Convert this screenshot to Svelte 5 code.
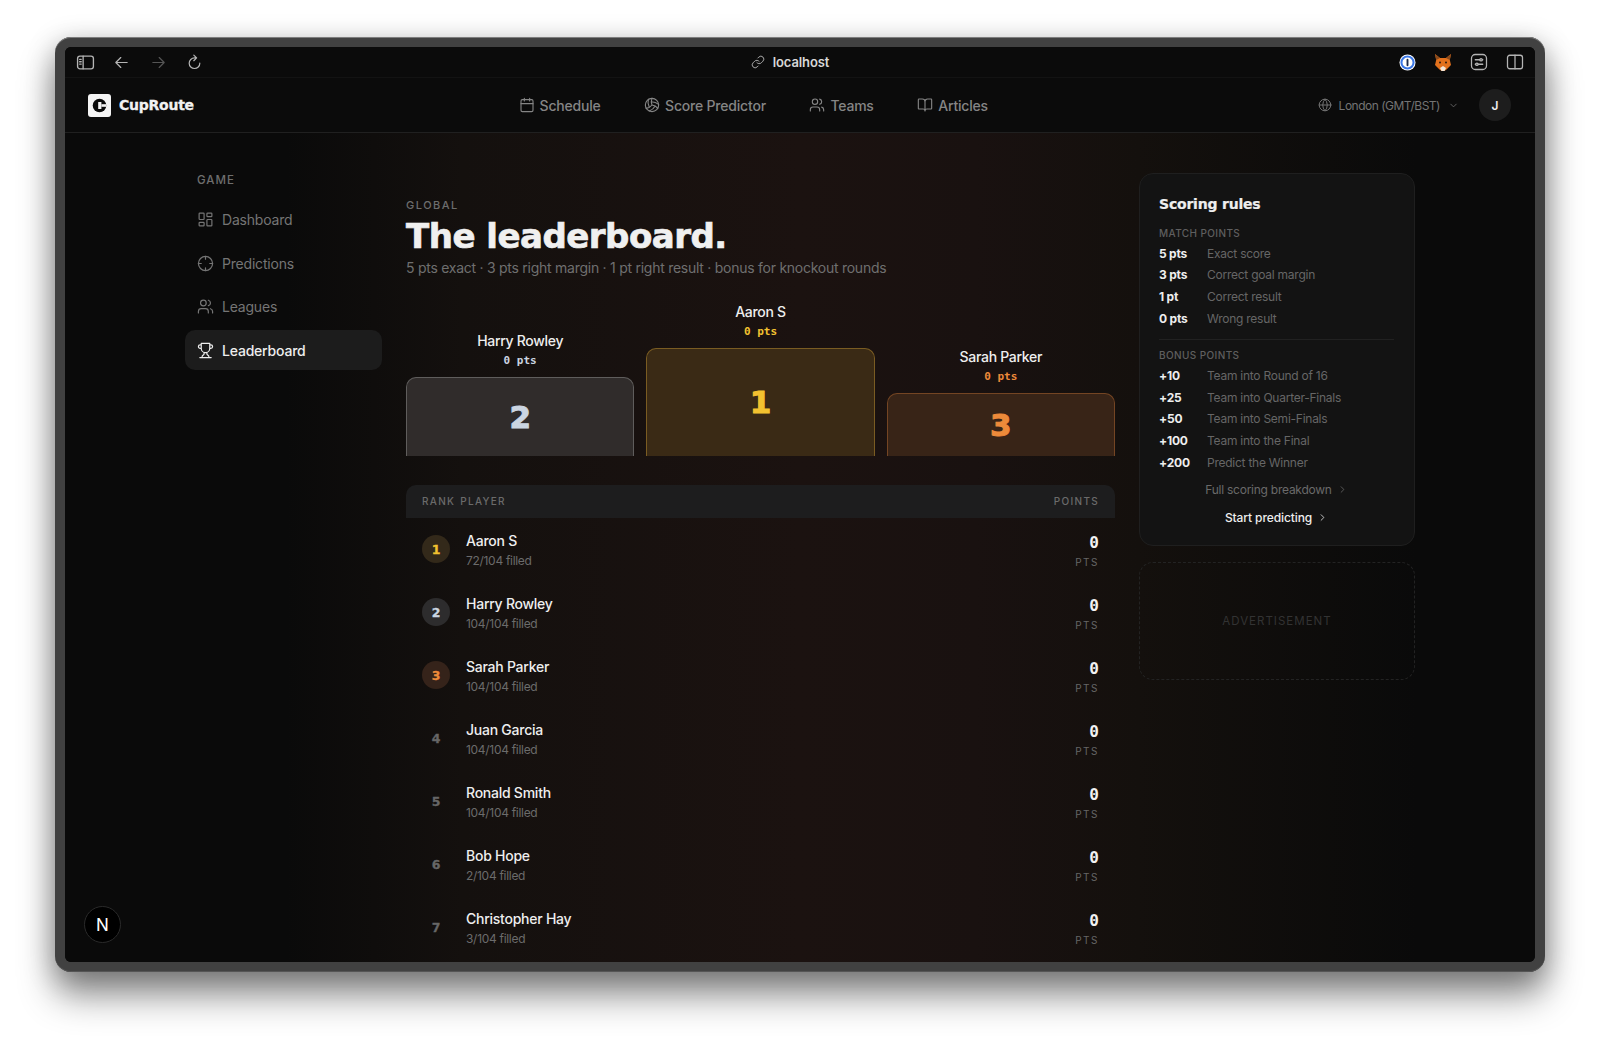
<script>
  const game = [
    { label: 'Dashboard', icon: 'dash' },
    { label: 'Predictions', icon: 'cross' },
    { label: 'Leagues', icon: 'users' },
    { label: 'Leaderboard', icon: 'trophy', active: true }
  ];
  const top = [
    { label: 'Schedule', icon: 'cal' },
    { label: 'Score Predictor', icon: 'ball' },
    { label: 'Teams', icon: 'users' },
    { label: 'Articles', icon: 'book' }
  ];
  const podium = [
    { name: 'Harry Rowley', rank: 2, cls: 'silver' },
    { name: 'Aaron S', rank: 1, cls: 'gold' },
    { name: 'Sarah Parker', rank: 3, cls: 'bronze' }
  ];
  const rows = [
    ['Aaron S', '72/104 filled', 'gold'],
    ['Harry Rowley', '104/104 filled', 'silver'],
    ['Sarah Parker', '104/104 filled', 'bronze'],
    ['Juan Garcia', '104/104 filled', ''],
    ['Ronald Smith', '104/104 filled', ''],
    ['Bob Hope', '2/104 filled', ''],
    ['Christopher Hay', '3/104 filled', '']
  ];
  const match = [['5 pts', 'Exact score'], ['3 pts', 'Correct goal margin'], ['1 pt', 'Correct result'], ['0 pts', 'Wrong result']];
  const bonus = [['+10', 'Team into Round of 16'], ['+25', 'Team into Quarter-Finals'], ['+50', 'Team into Semi-Finals'], ['+100', 'Team into the Final'], ['+200', 'Predict the Winner']];
</script>

{#snippet icon(name, size)}
  <svg class="ic" width={size} height={size} viewBox="0 0 24 24" fill="none" stroke="currentColor" stroke-width="1.7" stroke-linecap="round" stroke-linejoin="round">
    {#if name === 'cal'}
      <rect x="3" y="4" width="18" height="18" rx="2" /><path d="M16 2v4M8 2v4M3 10h18" />
    {:else if name === 'ball'}
      <circle cx="12" cy="12" r="10" /><path d="M11.1 7.1a16.55 16.55 0 0 1 10.9 4M12 12a12.6 12.6 0 0 1-8.7 5M16.8 13.6a16.55 16.55 0 0 1-9 7.5M20.7 17a12.8 12.8 0 0 0-8.7-5 13.3 13.3 0 0 1 0-10M6.6 3.3a16.55 16.55 0 0 0 1.1 11.4" />
    {:else if name === 'users'}
      <path d="M16 21v-2a4 4 0 0 0-4-4H6a4 4 0 0 0-4 4v2M22 21v-2a4 4 0 0 0-3-3.87M16 3.13a4 4 0 0 1 0 7.75" /><circle cx="9" cy="7" r="4" />
    {:else if name === 'book'}
      <path d="M12 7v14M3 18a1 1 0 0 1-1-1V4a1 1 0 0 1 1-1h5a4 4 0 0 1 4 4 4 4 0 0 1 4-4h5a1 1 0 0 1 1 1v13a1 1 0 0 1-1 1h-6a3 3 0 0 0-3 3 3 3 0 0 0-3-3z" />
    {:else if name === 'globe'}
      <circle cx="12" cy="12" r="10" /><path d="M12 2a14.5 14.5 0 0 0 0 20 14.5 14.5 0 0 0 0-20M2 12h20" />
    {:else if name === 'down'}
      <path d="m6 9 6 6 6-6" />
    {:else if name === 'right'}
      <path d="m9 18 6-6-6-6" />
    {:else if name === 'dash'}
      <rect x="3" y="3" width="7" height="9" rx="1" /><rect x="14" y="3" width="7" height="5" rx="1" /><rect x="14" y="12" width="7" height="9" rx="1" /><rect x="3" y="16" width="7" height="5" rx="1" />
    {:else if name === 'cross'}
      <circle cx="12" cy="12" r="10" /><path d="M22 12h-4M6 12H2M12 6V2M12 22v-4" />
    {:else if name === 'trophy'}
      <path d="M6 9H4.5a2.5 2.5 0 0 1 0-5H6M18 9h1.5a2.5 2.5 0 0 0 0-5H18M4 22h16M10 14.66V17c0 .55-.47.98-.97 1.21C7.85 18.75 7 20.24 7 22M14 14.66V17c0 .55.47.98.97 1.21C16.15 18.75 17 20.24 17 22M18 2H6v7a6 6 0 0 0 12 0V2Z" />
    {:else if name === 'side'}
      <rect x="2" y="4" width="20" height="16" rx="3" /><path d="M9 4v16M4.6 8h2M4.6 11h2M4.6 14h2" />
    {:else if name === 'back'}
      <path d="M20 12H4M11 5l-7 7 7 7" />
    {:else if name === 'fwd'}
      <path d="M4 12h16M13 5l7 7-7 7" />
    {:else if name === 'reload'}
      <path d="M19.5 13a7.5 7.5 0 1 1-7.5-7.5h2M11 1.5l4 4-4 4" />
    {:else if name === 'link'}
      <path d="M10 13a5 5 0 0 0 7.54.54l3-3a5 5 0 0 0-7.07-7.07l-1.72 1.71M14 11a5 5 0 0 0-7.54-.54l-3 3a5 5 0 0 0 7.07 7.07l1.71-1.71" />
    {:else if name === 'tune'}
      <rect x="2" y="2" width="20" height="20" rx="5" /><path d="M7 9h6M16.5 9H17M7 15h.5M11 15h6" /><circle cx="14.7" cy="9" r="1.6" /><circle cx="9.2" cy="15" r="1.6" />
    {:else if name === 'split'}
      <rect x="2" y="3" width="20" height="18" rx="3" /><path d="M12 3v18" />
    {/if}
  </svg>
{/snippet}

<div class="window">
  <div class="screen">
    <div class="toolbar">
      <div class="tools left">
        <span class="tool">{@render icon('side', 19)}</span>
        <span class="tool">{@render icon('back', 17)}</span>
        <span class="tool dim">{@render icon('fwd', 17)}</span>
        <span class="tool">{@render icon('reload', 17)}</span>
      </div>
      <div class="address">{@render icon('link', 14)}<span>localhost</span></div>
      <div class="tools right">
        <span class="tool">
          <svg width="17" height="17" viewBox="0 0 18 18"><circle cx="9" cy="9" r="8.5" fill="#fff" /><circle cx="9" cy="9" r="6.4" fill="none" stroke="#3b78e7" stroke-width="2.2" /><rect x="8" y="5" width="2" height="8" rx="1" fill="#1b2a4a" /></svg>
        </span>
        <span class="tool">
          <svg width="18" height="17" viewBox="0 0 18 17"><path d="M1 0l5 4h6l5-4-1.2 6 1.2 5-4.5 4.5L10.5 17h-3L5.500 15.500 1 11l1.200-5z" fill="#e2711d" /><path d="M1 0l5 4-3.800 2zM17 0l-5 4 3.800 2z" fill="#8a4a1c" /><path d="M6 14l3-2 3 2-1.500 3h-3z" fill="#f3e6d8" /><circle cx="6" cy="8.500" r="1" fill="#2a1a10" /><circle cx="12" cy="8.500" r="1" fill="#2a1a10" /></svg>
        </span>
        <span class="tool">{@render icon('tune', 18)}</span>
        <span class="tool">{@render icon('split', 18)}</span>
      </div>
    </div>

    <header class="nav">
      <div class="brand">
        <svg width="23" height="23" viewBox="0 0 23 23"><rect width="23" height="23" rx="3" fill="#f4f4f4" /><circle cx="11.500" cy="11.500" r="6.800" fill="#0b0b0b" /><rect x="10.200" y="8" width="3.200" height="7" fill="#f4f4f4" /><rect x="13.400" y="10.200" width="5" height="2.600" fill="#f4f4f4" /></svg>
        <span>CupRoute</span>
      </div>
      <nav class="links">
        {#each top as t}
          <span class="link">{@render icon(t.icon, 16)}{t.label}</span>
        {/each}
      </nav>
      <div class="account">
        <span class="tz">{@render icon('globe', 14)}<span>London (GMT/BST)</span><span class="chev">{@render icon('down', 11)}</span></span>
        <span class="avatar">J</span>
      </div>
    </header>

    <div class="page">
      <aside class="side">
        <div class="side-title">GAME</div>
        {#each game as g}
          <div class="side-item" class:active={g.active}>{@render icon(g.icon, 17)}{g.label}</div>
        {/each}
      </aside>

      <main class="content">
        <div class="eyebrow">GLOBAL</div>
        <h1>The leaderboard.</h1>
        <p class="sub">5 pts exact · 3 pts right margin · 1 pt right result · bonus for knockout rounds</p>

        <section class="podium">
          {#each podium as p}
            <div class="pod {p.cls}">
              <div class="pod-name">{p.name}</div>
              <div class="pod-pts">0 pts</div>
              <div class="block r{p.rank}"><span>{p.rank}</span></div>
            </div>
          {/each}
        </section>

        <div class="thead">
          <span>RANK</span><span class="tplayer">PLAYER</span><span class="tpoints">POINTS</span>
        </div>
        {#each rows as r, i}
          <div class="row {r[2]}">
            <span class="badge" class:plain={!r[2]}>{i + 1}</span>
            <div class="who"><div class="who-name">{r[0]}</div><div class="who-sub">{r[1]}</div></div>
            <div class="score"><div class="score-n">0</div><div class="score-l">PTS</div></div>
          </div>
        {/each}
      </main>

      <aside class="rail">
        <div class="card">
          <h2>Scoring rules</h2>
          <div class="cap">MATCH POINTS</div>
          {#each match as m}
            <div class="rule"><b>{m[0]}</b><span>{m[1]}</span></div>
          {/each}
          <div class="rule-sep"></div>
          <div class="cap">BONUS POINTS</div>
          {#each bonus as m}
            <div class="rule"><b>{m[0]}</b><span>{m[1]}</span></div>
          {/each}
          <div class="cta muted">Full scoring breakdown {@render icon('right', 11)}</div>
          <div class="cta strong">Start predicting {@render icon('right', 11)}</div>
        </div>
        <div class="ad">ADVERTISEMENT</div>
      </aside>
    </div>

    <div class="devbadge"><span>N</span></div>
  </div>
</div>

<style>
  :global(body) { margin: 0; background: #fff; min-height: 1045px; }
  :global(html) { overflow: hidden; }
  .ic { flex: none; display: block; }
  .window {
    box-sizing: border-box; width: 1490px; height: 935px; margin: 37px 0 0 55px; padding: 10px;
    background: #414141; border-radius: 16px;
    box-shadow: inset 0 1px 0 #7d7d7d, inset 0 -1px 0 #555, 0 24px 36px rgba(0, 0, 0, 0.42), 0 6px 28px rgba(0, 0, 0, 0.26);
    font-family: Inter, "Liberation Sans", sans-serif; color: #f2f2f2;
  }
  .screen { position: relative; height: 100%; display: flex; flex-direction: column; background: #0a0a0a; border-radius: 6px; overflow: hidden; }

  .toolbar { flex: none; height: 30px; display: flex; align-items: center; justify-content: space-between; padding: 0 11px; position: relative; border-bottom: 1px solid #131313; background: #0b0b0b; }
  .tools { display: flex; align-items: center; gap: 18px; color: #b4b4b4; }
  .tools.left { gap: 18.500px; }
  .tool { width: 18px; display: flex; justify-content: center; }
  .dim { color: #555; }
  .address { position: absolute; left: 0; right: 20px; display: flex; justify-content: center; align-items: center; gap: 8px; font-size: 13px; font-weight: 600; letter-spacing: -0.1px; color: #d8d8d8; }
  .address :global(svg) { color: #a8a8a8; }

  .nav { flex: none; height: 54px; display: flex; align-items: center; justify-content: space-between; padding: 0 24px 0 23px; background: #0b0b0b; border-bottom: 1px solid #202020; }
  .brand { display: flex; align-items: center; gap: 8px; font-family: "DejaVu Sans", sans-serif; font-weight: 700; font-size: 14px; letter-spacing: -0.25px; color: #f2f2f2; -webkit-text-stroke: 0.3px #f2f2f2; }
  .links { display: flex; gap: 43.500px; margin-right: 5px; }
  .link { display: flex; align-items: center; gap: 5px; font-size: 14px; letter-spacing: -0.2px; font-weight: 500; color: #858585; }
  .account { display: flex; align-items: center; gap: 20px; }
  .tz { display: flex; align-items: center; gap: 7px; font-size: 12px; letter-spacing: -0.5px; color: #747474; }
  .chev { margin-left: 1px; }
  .avatar { width: 32px; height: 32px; border-radius: 50%; background: #1d1d1d; display: flex; align-items: center; justify-content: center; font-size: 12px; font-weight: 600; color: #eee; }

  .page {
    flex: 1; min-height: 0; display: flex; justify-content: center; gap: 24px; overflow: hidden;
    background: linear-gradient(90deg, #0a0a0a 15%, #14100e 27%, #1b1210 50%, #191110 62%, #14100d 73%, #0a0a0a 92%);
  }
  .side { width: 197px; flex: none; padding-top: 40px; display: flex; flex-direction: column; gap: 3.500px; }
  .side-title { font-size: 11.500px; letter-spacing: 1px; color: #6e6e6e; font-weight: 500; padding-left: 12px; margin-bottom: 8px; height: 15px; }
  .side-item { height: 40px; display: flex; align-items: center; gap: 8px; padding: 0 12px; font-size: 14px; letter-spacing: -0.2px; color: #757575; border-radius: 10px; }
  .side-item.active { background: #1c1c1c; color: #eee; font-weight: 500; }

  .content { width: 709px; flex: none; padding-top: 65px; }
  .eyebrow { font-size: 11px; letter-spacing: 1.500px; color: #6d6d6d; font-weight: 500; height: 14px; }
  h1 { margin: 5px 0 0; font-family: "DejaVu Sans", sans-serif; font-size: 34px; line-height: 38px; font-weight: 700; color: #f0f0f0; letter-spacing: -0.5px; -webkit-text-stroke: 0.7px #f0f0f0; }
  .sub { margin: 3px 0 0; font-size: 14px; line-height: 20px; letter-spacing: -0.26px; color: #6f6f6f; }

  .podium { margin-top: 17.500px; display: grid; grid-template-columns: repeat(3, 1fr); gap: 12px; align-items: end; height: 160px; }
  .pod { text-align: center; }
  .pod-name { font-size: 14px; font-weight: 500; letter-spacing: -0.3px; color: #eee; line-height: 20px; }
  .pod-pts { font-family: "DejaVu Sans Mono", "Liberation Mono", monospace; font-size: 11px; font-weight: 700; line-height: 16px; margin: 2px 0 8px; }
  .block { display: flex; align-items: center; justify-content: center; box-sizing: border-box; border: 1px solid; border-bottom: 0; border-radius: 10px 10px 0 0; font-family: "DejaVu Sans", sans-serif; font-weight: 700; font-size: 31px; -webkit-text-stroke: 1px currentColor; }
  .r1 { height: 108px; }
  .r2 { height: 79px; }
  .r3 { height: 63px; }
  .gold .pod-pts, .gold .block { color: #f2c230; }
  .silver .pod-pts, .silver .block { color: #cbd5e1; }
  .bronze .pod-pts, .bronze .block { color: #ed8a3a; }
  .gold .block { background: #3a2a15; border-color: #7a5c22; }
  .silver .block { background: #302c2b; border-color: #5f5d5c; }
  .bronze .block { background: #382417; border-color: #744523; }

  .thead { margin-top: 29px; height: 33px; display: flex; align-items: center; padding: 0 16px; background: #1d1d1e; border-radius: 10px 10px 0 0; font-size: 10px; letter-spacing: 1.300px; color: #6b6b6b; font-weight: 500; }
  .tplayer { margin-left: 5px; }
  .tpoints { margin-left: auto; }
  .row { height: 63px; display: flex; align-items: center; padding: 0 16px; }
  .badge { width: 28px; height: 28px; flex: none; border-radius: 50%; display: flex; align-items: center; justify-content: center; font-family: "DejaVu Sans", sans-serif; font-size: 12.500px; font-weight: 700; -webkit-text-stroke: 0.3px currentColor; color: #666; }
  .gold .badge { background: #33291a; color: #f2c230; }
  .silver .badge { background: #2d2c2d; color: #cbd5e1; }
  .bronze .badge { background: #35231a; color: #ed8a3a; }
  .who { margin-left: 16px; padding-top: 1px; }
  .who-name { font-size: 14px; font-weight: 500; letter-spacing: -0.25px; line-height: 19px; color: #eee; }
  .who-sub { font-size: 12px; letter-spacing: -0.3px; line-height: 17px; margin-top: 2px; color: #6b6b6b; }
  .score { margin-left: auto; text-align: right; padding-top: 3px; }
  .score-n { font-family: "DejaVu Sans Mono", monospace; font-size: 16px; line-height: 19px; font-weight: 700; color: #f2f2f2; }
  .score-l { font-size: 10px; letter-spacing: 1.500px; color: #666; line-height: 14px; margin-top: 3px; }

  .rail { width: 276px; flex: none; padding-top: 40px; display: flex; flex-direction: column; gap: 16px; }
  .card { box-sizing: border-box; height: 373px; padding: 20px 20px 20px 19px; background: #131313; border: 1px solid #1f1f1f; border-radius: 14px; }
  h2 { margin: 0; font-family: "DejaVu Sans", sans-serif; font-size: 14px; line-height: 20px; font-weight: 700; letter-spacing: -0.2px; color: #eee; -webkit-text-stroke: 0.2px #eee; }
  .cap { font-size: 10px; letter-spacing: 0.400px; color: #5f5f5f; font-weight: 500; line-height: 14px; margin-top: 12px; margin-bottom: 2.500px; }
  .rule { display: flex; height: 21.600px; align-items: center; font-size: 12px; }
  .rule b { width: 48px; font-weight: 700; letter-spacing: -0.2px; color: #eee; }
  .rule span { color: #666; letter-spacing: -0.25px; }
  .rule-sep { height: 1px; background: #212121; margin: 10.500px 0 0; }
  .rule-sep + .cap { margin-top: 8px; }
  .cta { display: flex; align-items: center; justify-content: center; gap: 5px; font-size: 12px; letter-spacing: -0.25px; height: 27.500px; }
  .cta.muted { color: #6a6a6a; margin-top: 3px; }
  .cta.strong { color: #eee; font-weight: 500; letter-spacing: -0.1px; }
  .ad { box-sizing: border-box; height: 118px; display: flex; align-items: center; justify-content: center; border: 1px dashed #232323; border-radius: 14px; font-size: 11.500px; letter-spacing: 1px; color: #333; }

  .devbadge { position: absolute; left: 19px; bottom: 19px; width: 35px; height: 35px; border-radius: 50%; background: #000; border: 1px solid #2a2a2a; display: flex; align-items: center; justify-content: center; font-size: 17px; font-weight: 400; color: #fff; }
</style>
